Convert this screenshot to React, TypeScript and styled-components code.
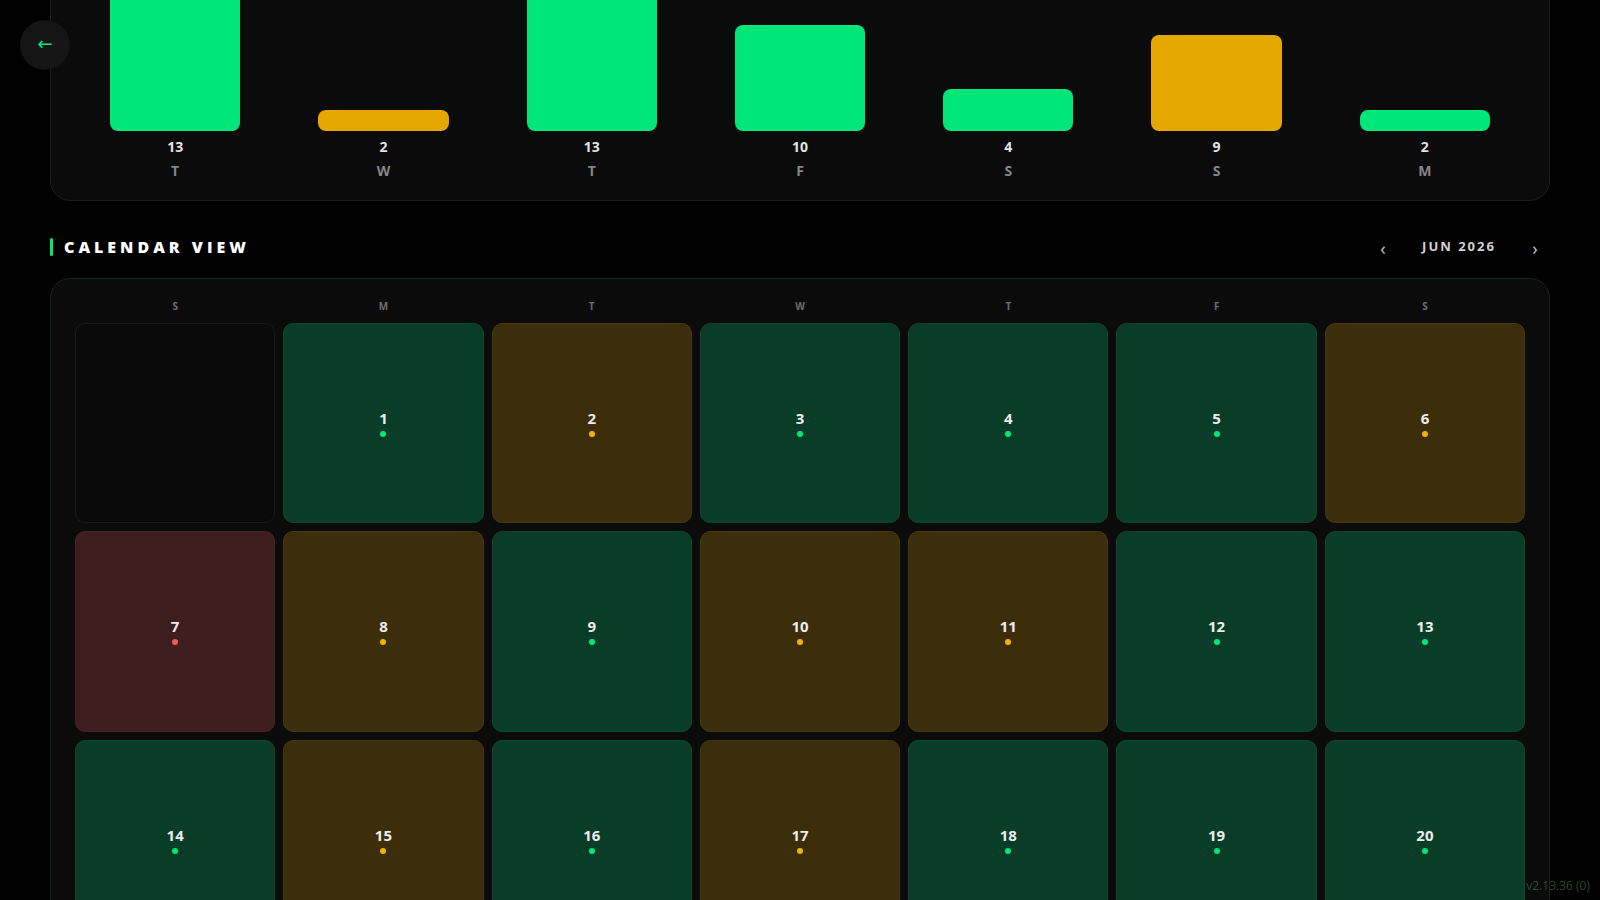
import styled, { createGlobalStyle } from "styled-components";

const GlobalStyle = createGlobalStyle`
  html, body {
    margin: 0;
    padding: 0;
    background: #000;
    overflow: hidden;
    font-family: "Open Sans", "Noto Sans", sans-serif;
  }
  * { box-sizing: border-box; }
`;

type Status = "good" | "warn" | "bad";

const colors = {
  good: { dot: "#00e67b", cell: "#093d27", border: "#0e4630", bar: "#00e67b" },
  warn: { dot: "#f2b300", cell: "#3c2e0b", border: "#46370f", bar: "#e5a800" },
  bad: { dot: "#f05a5a", cell: "#3d1d1e", border: "#482325", bar: "#f05a5a" },
};

const week: { day: string; value: number; status: Status }[] = [
  { day: "T", value: 13, status: "good" },
  { day: "W", value: 2, status: "warn" },
  { day: "T", value: 13, status: "good" },
  { day: "F", value: 10, status: "good" },
  { day: "S", value: 4, status: "good" },
  { day: "S", value: 9, status: "warn" },
  { day: "M", value: 2, status: "good" },
];

const june: Status[] = [
  "good", "warn", "good", "good", "good", "warn", "bad",
  "warn", "good", "warn", "warn", "good", "good", "good",
  "warn", "good", "warn", "good", "good", "good", "good",
  "good", "warn", "good", "good", "warn", "good", "good",
  "good", "good",
];

const Page = styled.main`
  padding: 0 50px 40px;
  margin-top: -32px;
`;

const Card = styled.section<{ $green?: boolean }>`
  background: #0b0b0b;
  border: 1px solid ${({ $green }) => ($green ? "#0f2a1f" : "#1d1d1d")};
  border-radius: 20px;
`;

const ChartCard = styled(Card)`
  padding: 24px 24px 20px;
`;

const SevenCols = styled.div`
  display: grid;
  grid-template-columns: repeat(7, 1fr);
  gap: 8px;
`;

const BarColumn = styled.div`
  display: flex;
  flex-direction: column;
  align-items: center;
`;

const BarArea = styled.div`
  height: 138px;
  width: 100%;
  display: flex;
  align-items: flex-end;
  justify-content: center;
`;

const Bar = styled.div<{ $status: Status }>`
  width: 65%;
  min-height: 20px;
  border-radius: 8px;
  background: ${({ $status }) => colors[$status].bar};
`;

const BarValue = styled.div`
  margin-top: 6px;
  font-size: 14px;
  line-height: 19px;
  font-weight: 700;
  color: #e2e2e2;
`;

const BarDay = styled.div`
  margin-top: 5px;
  font-size: 14px;
  line-height: 19px;
  font-weight: 700;
  color: #858585;
`;

const SectionHeader = styled.div`
  margin-top: 36px;
  margin-bottom: 21px;
  height: 20px;
  display: flex;
  align-items: center;
  justify-content: space-between;
`;

const Title = styled.h2`
  margin: 0;
  display: flex;
  align-items: center;
  gap: 11px;
  font-size: 16px;
  font-weight: 800;
  letter-spacing: 4px;
  color: #fff;

  &::before {
    content: "";
    width: 3px;
    height: 18px;
    border-radius: 2px;
    background: #00e67b;
  }
`;

const MonthNav = styled.div`
  display: flex;
  align-items: center;
`;

const NavButton = styled.button`
  width: 30px;
  height: 24px;
  padding: 0;
  margin-top: 2px;
  border: none;
  background: none;
  color: #c4c4c4;
  font-family: inherit;
  font-size: 18px;
  line-height: 20px;
  cursor: pointer;
`;

const MonthLabel = styled.span`
  width: 122px;
  margin-bottom: 3px;
  text-align: center;
  font-size: 13px;
  font-weight: 700;
  letter-spacing: 2px;
  color: #d2d2d2;
`;

const CalendarCard = styled(Card)`
  padding: 20px 24px 24px;
`;

const Weekday = styled.div`
  text-align: center;
  font-size: 10px;
  line-height: 14px;
  font-weight: 700;
  color: #6f6f6f;
  margin-bottom: 2px;
`;

const DayCell = styled.div<{ $status?: Status }>`
  aspect-ratio: 1;
  border-radius: 10px;
  border: 1px solid
    ${({ $status }) => ($status ? colors[$status].border : "#1b1b1b")};
  background: ${({ $status }) => ($status ? colors[$status].cell : "#0a0a0a")};
  display: flex;
  flex-direction: column;
  align-items: center;
  justify-content: center;
  gap: 4px;
`;

const DayNumber = styled.span`
  font-size: 15px;
  line-height: 18px;
  font-weight: 700;
  color: #ececec;
`;

const Dot = styled.span<{ $status: Status }>`
  width: 6px;
  height: 6px;
  border-radius: 50%;
  background: ${({ $status }) => colors[$status].dot};
`;

const BackButton = styled.button`
  position: fixed;
  top: 20px;
  left: 20px;
  width: 50px;
  height: 50px;
  border-radius: 50%;
  border: none;
  background: #151515;
  color: #00e67b;
  font-size: 18px;
  line-height: 1;
  padding: 0 0 3px;
  font-family: "DejaVu Sans", sans-serif;
  cursor: pointer;
`;

const Version = styled.div`
  position: fixed;
  right: 10px;
  bottom: 6px;
  font-size: 12px;
  color: #2c4a30;
`;

const weekdays = ["S", "M", "T", "W", "T", "F", "S"];

export default function App() {
  const firstOffset = 1; // June 2026 starts on Monday
  const cells: (number | null)[] = [
    ...Array(firstOffset).fill(null),
    ...june.map((_, i) => i + 1),
  ];
  while (cells.length % 7) cells.push(null);
  const max = Math.max(...week.map((w) => w.value));

  return (
    <>
      <GlobalStyle />
      <BackButton>←</BackButton>
      <Page>
        <ChartCard>
          <SevenCols>
            {week.map((w, i) => (
              <BarColumn key={i}>
                <BarArea>
                  <Bar
                    $status={w.status}
                    style={{ height: `${(w.value / max) * 100}%` }}
                  />
                </BarArea>
                <BarValue>{w.value}</BarValue>
                <BarDay>{w.day}</BarDay>
              </BarColumn>
            ))}
          </SevenCols>
        </ChartCard>

        <SectionHeader>
          <Title>CALENDAR VIEW</Title>
          <MonthNav>
            <NavButton>‹</NavButton>
            <MonthLabel>JUN 2026</MonthLabel>
            <NavButton>›</NavButton>
          </MonthNav>
        </SectionHeader>

        <CalendarCard $green>
          <SevenCols>
            {weekdays.map((d, i) => (
              <Weekday key={i}>{d}</Weekday>
            ))}
            {cells.map((day, i) =>
              day ? (
                <DayCell key={i} $status={june[day - 1]}>
                  <DayNumber>{day}</DayNumber>
                  <Dot $status={june[day - 1]} />
                </DayCell>
              ) : (
                <DayCell key={i} />
              )
            )}
          </SevenCols>
        </CalendarCard>
      </Page>
      <Version>v2.13.36 (0)</Version>
    </>
  );
}
